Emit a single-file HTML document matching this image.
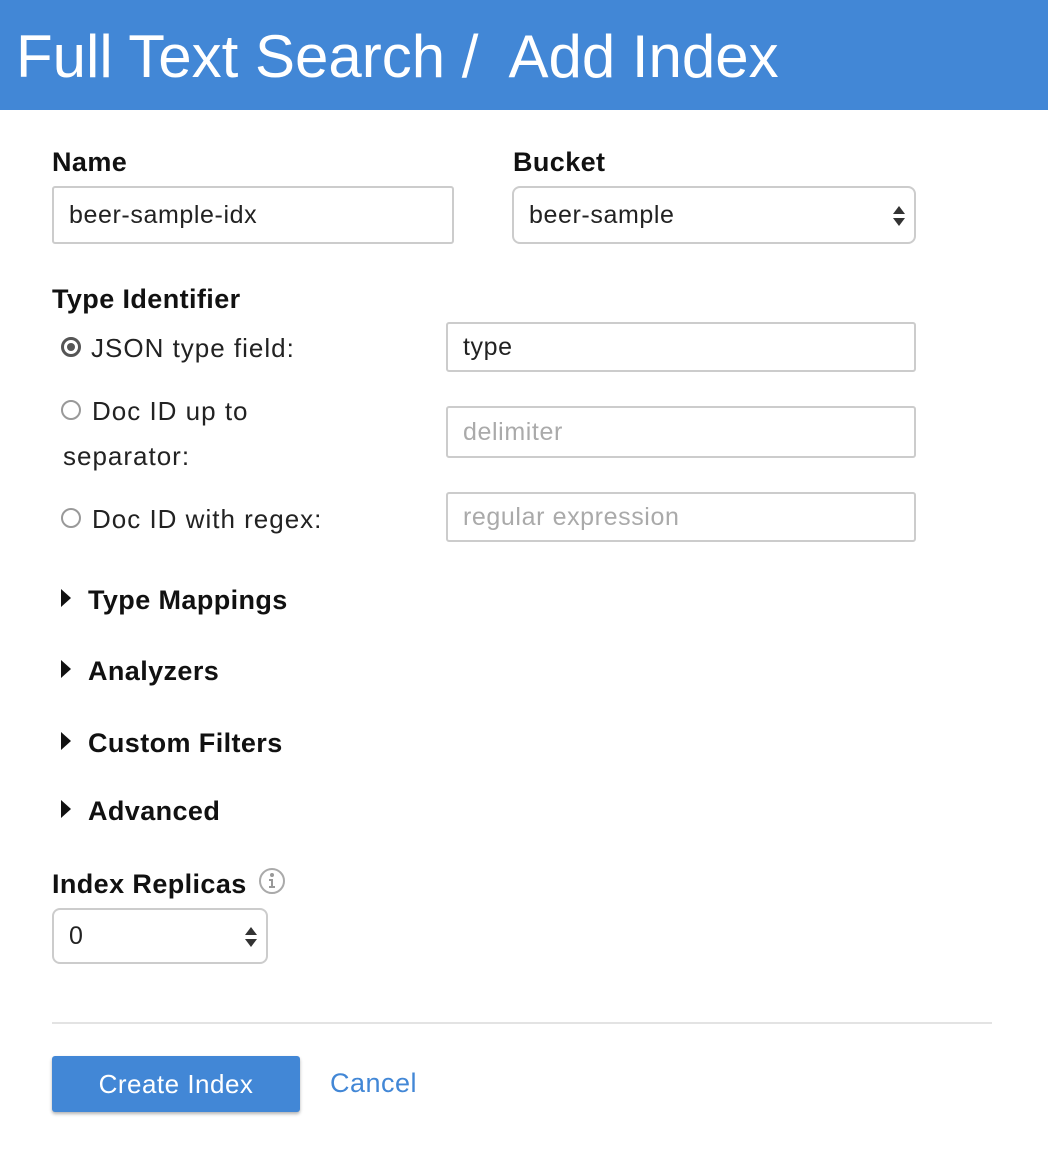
<!DOCTYPE html>
<html><head><style>
body{margin:0;width:1048px;height:1164px;background:#fff;font-family:"Liberation Sans",sans-serif;color:#222;position:relative;overflow:hidden}
.a{position:absolute;white-space:nowrap}
.hdr{position:absolute;left:0;top:0;width:1048px;height:110px;background:#4287d6}
.t{left:16px;top:22px;font-size:60px;color:#fff;letter-spacing:0px}
.lbl{font-size:27px;font-weight:bold;color:#111;letter-spacing:0.4px}
.inp{position:absolute;border:2px solid #ccc;border-radius:3px;box-sizing:border-box;font-size:25px;letter-spacing:0.6px;padding-left:15px;display:flex;align-items:center}
.ph{color:#aaa}
.sel{border-radius:8px}
.rad{position:absolute;width:20px;height:20px;border:2px solid #999;border-radius:50%;box-sizing:border-box}
.txt{font-size:26px;color:#222;letter-spacing:1px}
.tri{position:absolute;width:0;height:0;border-top:9px solid transparent;border-bottom:9px solid transparent;border-left:10px solid #111}
</style></head><body>
<div class="hdr"></div>
<div class="a t">Full Text Search /&nbsp; Add Index</div>

<div class="a lbl" style="left:52px;top:147px">Name</div>
<div class="a lbl" style="left:513px;top:147px">Bucket</div>
<div class="inp" style="left:52px;top:186px;width:402px;height:58px">beer-sample-idx</div>
<div class="inp sel" style="left:512px;top:186px;width:404px;height:58px">beer-sample
<svg style="position:absolute;right:8px;top:16px" width="14" height="24"><path d="M1 10L7 2L13 10Z M1 14L7 22L13 14Z" fill="#333"/></svg></div>

<div class="a lbl" style="left:52px;top:284px">Type Identifier</div>
<div class="rad" style="left:61px;top:337px;border:3px solid #555"><div style="position:absolute;left:3px;top:3px;width:8px;height:8px;border-radius:50%;background:#555"></div></div>
<div class="a txt" style="left:91px;top:333px">JSON type field:</div>
<div class="inp" style="left:446px;top:322px;width:470px;height:50px">type</div>

<div class="rad" style="left:61px;top:400px"></div>
<div class="a txt" style="left:92px;top:396px">Doc ID up to</div>
<div class="a txt" style="left:63px;top:441px">separator:</div>
<div class="inp ph" style="left:446px;top:406px;width:470px;height:52px">delimiter</div>

<div class="rad" style="left:61px;top:508px"></div>
<div class="a txt" style="left:92px;top:504px">Doc ID with regex:</div>
<div class="inp ph" style="left:446px;top:492px;width:470px;height:50px">regular expression</div>

<div class="tri" style="left:61px;top:589px"></div><div class="a lbl" style="left:88px;top:585px">Type Mappings</div>
<div class="tri" style="left:61px;top:660px"></div><div class="a lbl" style="left:88px;top:656px">Analyzers</div>
<div class="tri" style="left:61px;top:732px"></div><div class="a lbl" style="left:88px;top:728px">Custom Filters</div>
<div class="tri" style="left:61px;top:800px"></div><div class="a lbl" style="left:88px;top:796px">Advanced</div>

<div class="a lbl" style="left:52px;top:869px">Index Replicas</div>
<svg class="a" style="left:258px;top:867px" width="28" height="28"><circle cx="14" cy="14" r="12" fill="none" stroke="#aaa" stroke-width="2"/><circle cx="14" cy="8" r="2" fill="#999"/><path d="M11 12H15V19H17V21H11V19H13V14H11Z" fill="#999"/></svg>
<div class="inp sel" style="left:52px;top:908px;width:216px;height:56px">0
<svg style="position:absolute;right:8px;top:15px" width="14" height="24"><path d="M1 10L7 2L13 10Z M1 14L7 22L13 14Z" fill="#333"/></svg></div>

<div class="a" style="left:52px;top:1022px;width:940px;height:2px;background:#e3e3e3"></div>
<div class="a" style="left:52px;top:1056px;width:248px;height:56px;background:#4287d6;border-radius:3px;box-shadow:0 2px 3px rgba(0,0,0,.3);color:#fff;font-size:26px;letter-spacing:0.5px;display:flex;align-items:center;justify-content:center">Create Index</div>
<div class="a" style="left:330px;top:1068px;font-size:27px;letter-spacing:0.5px;color:#4287d6">Cancel</div>
</body></html>
